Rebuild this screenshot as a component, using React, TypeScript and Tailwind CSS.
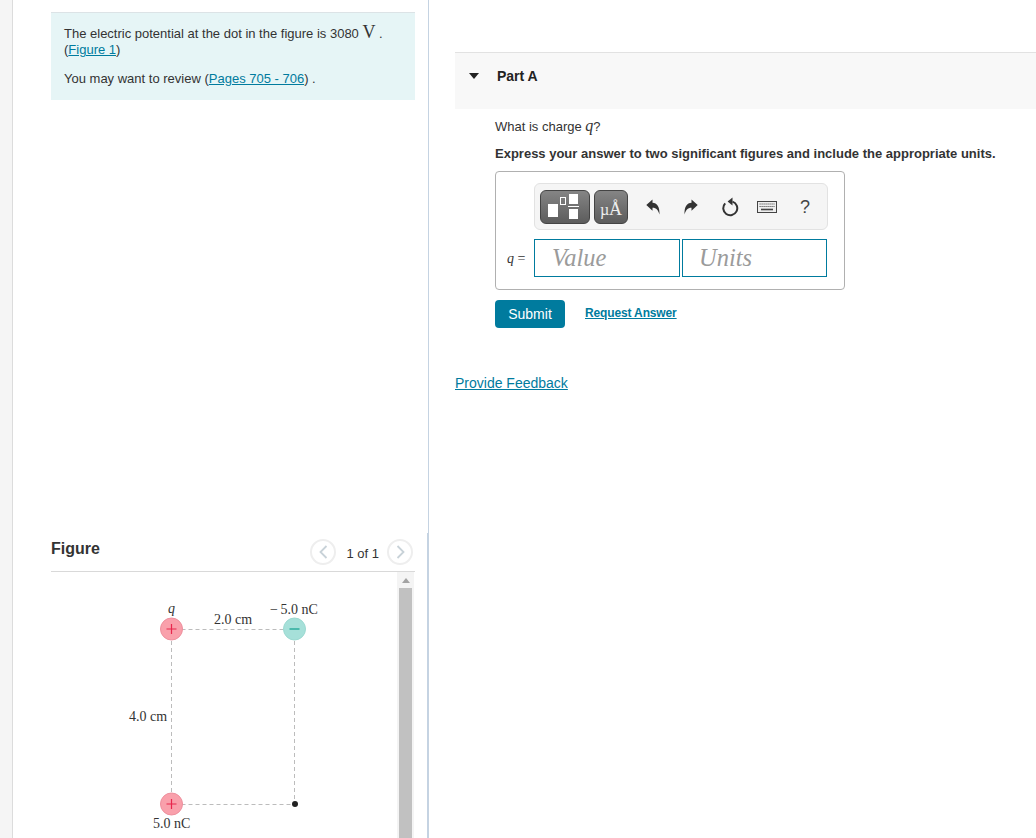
import React from 'react';

const linkClass = 'text-[#007b9e] underline';

const FigureDrawing = () => (
  <svg width="240" height="245" viewBox="0 0 240 245" className="block">
    <g stroke="#bcbcbc" strokeWidth="1" strokeDasharray="4 3" fill="none">
      <path d="M59.5 34.5H170" />
      <path d="M59.5 209.5H170" />
      <path d="M49.5 46V198" />
      <path d="M172.5 46V205" />
    </g>
    <circle cx="49.5" cy="34" r="11" fill="#f9a0ab" stroke="#ee8f9d" />
    <path d="M44.5 34H54.5M49.5 29V39" stroke="#e8274d" strokeWidth="1.2" />
    <circle cx="172.5" cy="34" r="11" fill="#a6e0d9" stroke="#9bd9d1" />
    <path d="M167.5 34H177.5" stroke="#1aa594" strokeWidth="1.3" />
    <circle cx="49.5" cy="209" r="11" fill="#f9a0ab" stroke="#ee8f9d" />
    <path d="M44.5 209H54.5M49.5 204V214" stroke="#e8274d" strokeWidth="1.2" />
    <circle cx="173" cy="209" r="3" fill="#222" />
    <g fill="#333" fontFamily="'Liberation Serif', serif" fontSize="14">
      <text x="46" y="18" fontStyle="italic">q</text>
      <text x="92" y="29">2.0 cm</text>
      <text x="148" y="19">−<tspan dx="2.5">5.0 nC</tspan></text>
      <text x="7" y="126">4.0 cm</text>
      <text x="31" y="233">5.0 nC</text>
    </g>
  </svg>
);

// coordinates are relative to the inside of the 50x34 button
const StructureIcon = () => (
  <svg width="48" height="32" viewBox="0 0 48 32" className="block">
    <rect x="7" y="13" width="10" height="13" fill="#fff" />
    <rect x="19.5" y="6.5" width="5" height="7" fill="none" stroke="#fff" strokeWidth="1" />
    <rect x="28" y="3" width="9" height="10" fill="#fff" />
    <rect x="27" y="15" width="11" height="1" fill="#fff" />
    <rect x="28" y="18" width="9" height="10" fill="#fff" />
  </svg>
);

const ArrowLeft = ({ flip = false }: { flip?: boolean }) => (
  <svg width="14" height="16" viewBox="0 0 14 16" className={flip ? '-scale-x-100' : ''}>
    <path d="M0.3 6 6.5 0.5V3.8C11 4 13.7 7.5 13.5 15.5 12.2 11.5 10.5 8.8 6.5 8.8V11.8Z" fill="#333" />
  </svg>
);

const ResetIcon = () => (
  <svg width="17" height="20" viewBox="0 0 17 20" fill="none">
    <path d="M3.2 6.4A7 7 0 1 0 10.5 4.6" stroke="#333" strokeWidth="2" />
    <path d="M10.5 0.5V8.5L5.6 4.4Z" fill="#333" />
  </svg>
);

const KeyboardIcon = () => (
  <svg width="20" height="12" viewBox="0 0 20 12">
    <rect x="0.5" y="0.5" width="19" height="11" fill="#eeeeee" stroke="#444" />
    <path d="M2.5 3H17.5M2.5 5.5H17.5" stroke="#555" strokeWidth="1.2" strokeDasharray="1.2 0.8" />
    <path d="M4 8.5H16" stroke="#444" strokeWidth="1.6" />
  </svg>
);

const PagerButton = ({ dir }: { dir: 'left' | 'right' }) => (
  <div className="flex h-[26px] w-[26px] items-center justify-center rounded-full border-2 border-[#eeeeee] bg-white">
    <svg width="9" height="14" viewBox="0 0 9 14" fill="none">
      <path d={dir === 'left' ? 'M7.5 1 1.5 7l6 6' : 'M1.5 1l6 6-6 6'} stroke="#c8d2d8" strokeWidth="1.8" />
    </svg>
  </div>
);

export default function App() {
  return (
    <div className="flex h-[838px] w-[1036px] overflow-hidden bg-white font-['Liberation_Sans',sans-serif] text-[13px] text-[#333]">
      {/* gutter */}
      <div className="w-[13px] shrink-0 border-r border-[#dcdcdc] bg-[#f5f5f5]" />

      {/* left panel */}
      <div className="flex w-[416px] shrink-0 flex-col border-r border-[#c5d3e2] pl-[38px] pr-[13px] pt-3">
        <div className="h-[88px] border-t border-[#dce3e6] bg-[#e6f5f6] px-[13px] pt-[13px]">
          <p className="h-4 leading-4">
            The electric potential at the dot in the figure is 3080{' '}
            <span className="font-['Liberation_Serif',serif] text-lg leading-[0]">V</span> .
          </p>
          <p className="h-4 leading-4">
            (<span className={linkClass}>Figure 1</span>)
          </p>
          <p className="mt-[13px] leading-4">
            You may want to review (<span className={linkClass}>Pages 705 - 706</span>) .
          </p>
        </div>

        <div className="-mr-[13px] mt-[433px] flex min-h-0 flex-1 flex-col border-r border-[#c5d3e2] pr-3">
          <div className="flex h-[39px] shrink-0 items-start justify-between border-b border-[#d9d9d9] pt-[6px]">
            <h2 className="text-base font-bold leading-5">Figure</h2>
            <div className="mr-[2px] flex items-center">
              <PagerButton dir="left" />
              <span className="ml-[10px] mr-2 mt-1 leading-4">1 of 1</span>
              <PagerButton dir="right" />
            </div>
          </div>

          <div className="flex min-h-0 flex-1 justify-between">
            <div className="pl-[71px] pt-[23px]">
              <FigureDrawing />
            </div>
            <div className="mr-px w-[17px] shrink-0 bg-[#f4f4f4]">
              <div className="flex h-4 items-center justify-center">
                <div className="h-0 w-0 border-x-4 border-b-[5px] border-x-transparent border-b-[#a3a3a3]" />
              </div>
              <div className="mx-auto h-full w-[13px] bg-[#c1c1c1]" />
            </div>
          </div>
        </div>
      </div>

      {/* right panel */}
      <div className="min-w-0 flex-1 pl-[26px] pt-[52px]">
        <div className="flex h-[57px] items-start border-t border-[#e2e2e2] bg-[#f8f8f8] pl-[14px] pt-[15px]">
          <div className="mt-[5px] h-0 w-0 border-x-[5px] border-t-[6px] border-x-transparent border-t-[#222]" />
          <h3 className="ml-[18px] text-sm font-bold leading-4 text-[#222]">Part A</h3>
        </div>

        <div className="pl-10">
          <p className="mt-[10px] h-4 leading-4">
            What is charge <span className="font-['Liberation_Serif',serif] text-base italic leading-[0]">q</span>?
          </p>
          <p className="mt-[11px] h-4 font-bold leading-4">
            Express your answer to two significant figures and include the appropriate units.
          </p>

          <div className="mt-[9px] h-[119px] w-[350px] rounded border border-[#b0b0b0] pl-[38px] pt-[11px]">
            <div className="flex h-[47px] w-[294px] items-center rounded-md border border-[#e2e2e2] bg-[#f5f5f5] pl-[5px]">
              <div className="h-[34px] w-[50px] shrink-0 rounded-md border border-[#444] bg-gradient-to-b from-[#858585] to-[#5c5c5c]">
                <StructureIcon />
              </div>
              <div className="ml-1 flex h-[34px] w-[34px] shrink-0 items-baseline justify-center rounded-md border border-[#444] bg-gradient-to-b from-[#858585] to-[#5c5c5c] pt-1 font-['Liberation_Serif',serif] leading-6 text-[#eeeeee]">
                <span className="text-base">µ</span>
                <span className="text-lg">Å</span>
              </div>
              <div className="ml-[18px]"><ArrowLeft /></div>
              <div className="ml-6"><ArrowLeft flip /></div>
              <div className="ml-6"><ResetIcon /></div>
              <div className="ml-[18px]"><KeyboardIcon /></div>
              <span className="ml-[23px] text-lg leading-none text-[#444]">?</span>
            </div>

            <div className="relative mt-[9px] flex gap-[2px]">
              <span className="absolute left-[-27px] top-[10px] font-['Liberation_Serif',serif] text-sm">
                <i>q</i> =
              </span>
              <div className="flex h-[38px] w-[146px] items-center border border-[#007b9e] pl-[17px] font-['Liberation_Serif',serif] text-[24.5px] italic text-[#9b9b9b]">
                Value
              </div>
              <div className="flex h-[38px] w-[145px] items-center border border-[#007b9e] pl-4 font-['Liberation_Serif',serif] text-[24.5px] italic text-[#9b9b9b]">
                Units
              </div>
            </div>
          </div>

          <div className="mt-[10px] flex items-start">
            <button className="h-7 w-[70px] rounded-sm bg-[#007b9e] text-sm text-white">Submit</button>
            <span className={`ml-5 mt-[5px] text-xs font-bold leading-4 tracking-[-0.14px] ${linkClass}`}>Request Answer</span>
          </div>
        </div>

        <p className={`mt-[47px] text-sm leading-4 ${linkClass}`}>Provide Feedback</p>
      </div>
    </div>
  );
}
